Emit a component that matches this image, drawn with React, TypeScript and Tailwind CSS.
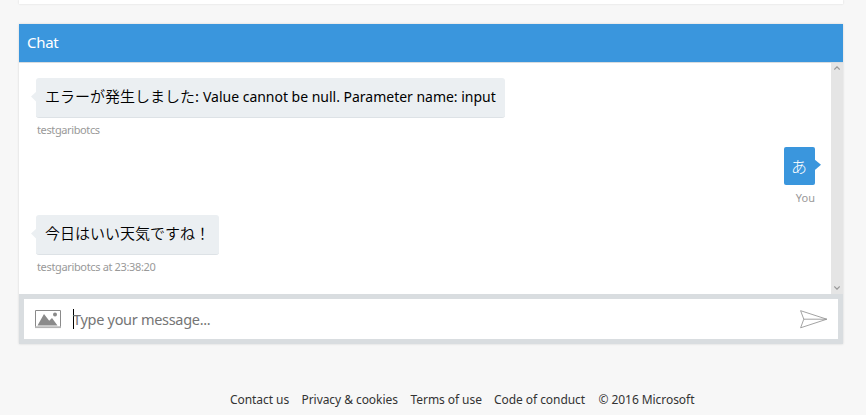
import type { ReactNode } from "react";

function BotMessage({ children, meta, width, metaClass }: { children: ReactNode; meta: string; width: string; metaClass: string }) {
  return (
    <div className="flex h-[68px] flex-col items-start pl-[17px]">
      <div className={`relative flex h-[40px] items-center rounded-[3px] border-b border-[#dde2e6] bg-[#ebeff2] pb-[2px] pl-[9px] whitespace-nowrap text-black ${width}`}>
        <svg className="absolute top-[13px] -left-[5px]" width="6" height="12" viewBox="0 0 6 12" fill="#ebeff2">
          <path d="M6 0L0 5.5L6 11.5Z" />
        </svg>
        {children}
      </div>
      <div className={`mt-[4px] ml-px h-4 text-[11px] leading-4 whitespace-nowrap text-[#999999] ${metaClass}`}>{meta}</div>
    </div>
  );
}

function PictureIcon() {
  return (
    <svg width="26" height="19" viewBox="0 0 26 19" fill="none">
      <path d="M0.5 17V0.5H25.5V17" stroke="#8a8a8a" />
      <path d="M0 17.2H26" stroke="#b4b4b4" strokeWidth="1.8" />
      <path d="M2.5 15.5L9 4L14.2 10.8L17 8L22.5 15.5Z" fill="#8a8a8a" />
      <circle cx="20" cy="4.5" r="2" fill="#8a8a8a" />
    </svg>
  );
}

function SendIcon() {
  return (
    <svg width="28" height="19" viewBox="0 0 28 19" fill="none" stroke="#929292" strokeWidth="0.85">
      <path d="M0.6 0.7L26.8 9.2L0.6 17.8L3.8 9.2Z" />
      <path d="M3.8 9.2H26.8" />
    </svg>
  );
}

const links = [
  { label: "Contact us", width: "w-[71.5px]" },
  { label: "Privacy & cookies", width: "w-[109px]" },
  { label: "Terms of use", width: "w-[83.5px]" },
  { label: "Code of conduct", width: "w-[104.5px]" },
  { label: "© 2016 Microsoft", width: "w-[98px]" },
];

export default function App() {
  return (
    <div className="h-[415px] overflow-hidden bg-[#f7f7f7] px-[19px] font-['Noto_Sans','Noto_Sans_CJK_JP',sans-serif]">
      <div className="h-1 w-[824px] bg-white shadow-[0_0_2px_#d4d4d4]" />
      <main className="mt-5 w-[824px] bg-white shadow-[0_0_2px_#d4d4d4]">
        <header className="flex h-[38px] items-center bg-[#3a96dd] pl-2 text-[15px] tracking-[-0.3px] text-white"><span className="-mt-px">Chat</span></header>
        <div className="flex h-[232px] border-t border-[#d8dcdf]">
          <div className="w-[812px] pt-[15px]">
            <BotMessage width="w-[469px]" meta="testgaribotcs" metaClass="tracking-[-0.38px]">
              <span className="w-[158px] font-['Noto_Sans_CJK_JP',sans-serif] text-[15px] font-[350]">エラーが発生しました:</span>
              <span className="text-[14px] tracking-[-0.015px]">Value cannot be null. Parameter name: input</span>
            </BotMessage>
            <div className="flex h-[69px] flex-col items-end pt-px pr-[16px]">
              <div className="relative flex h-[38px] w-[31px] items-center justify-center rounded-[2px] bg-[#3a96dd] pr-px font-['Noto_Sans_CJK_JP',sans-serif] text-[16px] font-light text-white">
                あ
                <svg className="absolute top-[12px] -right-[6px]" width="7" height="12" viewBox="0 0 7 12" fill="#3a96dd">
                  <path d="M0 0L7 5.8L0 11.8Z" />
                </svg>
              </div>
              <div className="mt-[5px] h-4 text-[11px] leading-4 text-[#999999]">You</div>
            </div>
            <BotMessage width="w-[183px]" meta="testgaribotcs at 23:38:20" metaClass="tracking-[-0.35px]">
              <span className="font-['Noto_Sans_CJK_JP',sans-serif] text-[15px] font-[350]">今日はいい天気ですね！</span>
            </BotMessage>
          </div>
          <div className="flex w-3 flex-col items-center justify-between bg-[#e5e5e5] pt-[3px] pb-[4px]">
            <svg width="6" height="4" viewBox="0 0 6 4" fill="none" stroke="#999" strokeWidth="1.2"><path d="M0.3 3.5L3 0.8L5.7 3.5" /></svg>
            <svg width="6" height="4" viewBox="0 0 6 4" fill="none" stroke="#999" strokeWidth="1.2"><path d="M0.3 0.5L3 3.2L5.7 0.5" /></svg>
          </div>
        </div>
        <div className="flex h-[50px] items-center border-[5px] border-[#d9dde0] bg-white pr-[10px] pl-[11px]">
          <PictureIcon />
          <div className="ml-3 h-5 w-px bg-black" />
          <div className="-ml-px flex-1 pt-[2px] text-[14.5px] tracking-[-0.3px] text-[#757575]">Type your message...</div>
          <SendIcon />
        </div>
      </main>
      <footer className="mt-[48px] flex h-4 pl-[211px] text-[12px] leading-4 tracking-[-0.06px] whitespace-nowrap text-[#333333]">
        {links.map((link) => (
          <span key={link.label} className={link.width}>{link.label}</span>
        ))}
      </footer>
    </div>
  );
}
